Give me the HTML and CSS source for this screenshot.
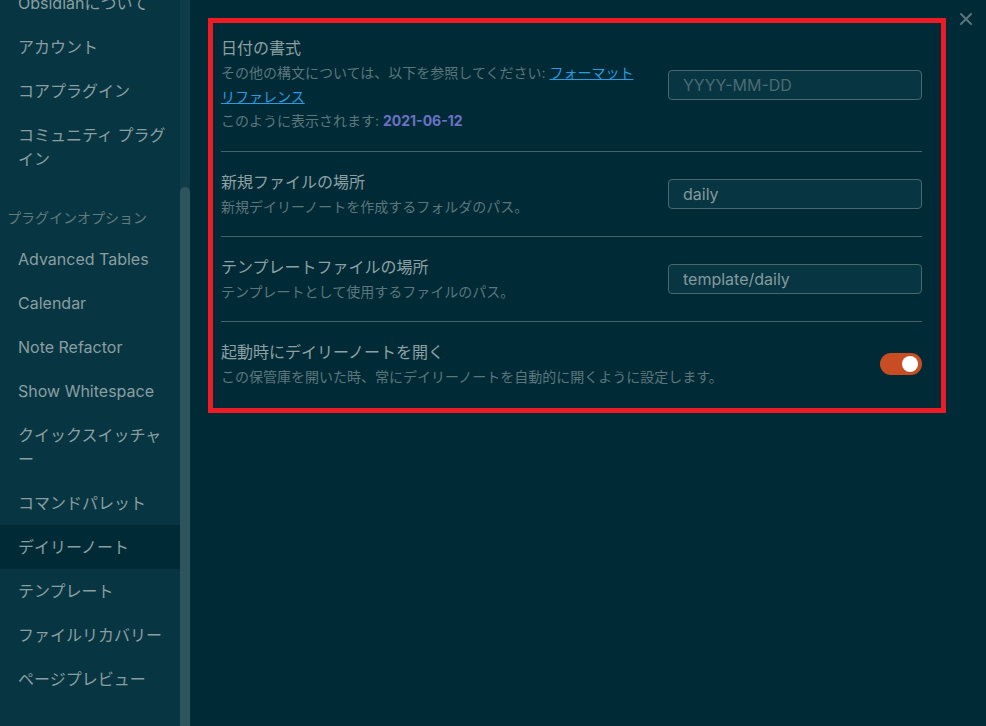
FILE: index.html
```html
<!DOCTYPE html>
<html lang="ja">
<head>
<meta charset="utf-8">
<title>設定 - デイリーノート</title>
<link rel="stylesheet" href="styles.css">
</head>
<body>
<div class="app">
  <nav class="sidebar">
    <div class="tabs">
      <div class="tab">Obsidianについて</div>
      <div class="tab">アカウント</div>
      <div class="tab">コアプラグイン</div>
      <div class="tab">コミュニティ プラグイン</div>
      <div class="group-title">プラグインオプション</div>
      <div class="tab">Advanced Tables</div>
      <div class="tab">Calendar</div>
      <div class="tab">Note Refactor</div>
      <div class="tab">Show Whitespace</div>
      <div class="tab">クイックスイッチャー</div>
      <div class="tab">コマンドパレット</div>
      <div class="tab active">デイリーノート</div>
      <div class="tab">テンプレート</div>
      <div class="tab">ファイルリカバリー</div>
      <div class="tab">ページプレビュー</div>
    </div>
  </nav>
  <div class="scrollbar"><div class="thumb"></div></div>
  <main class="content">
    <div class="settings">
      <div class="item">
        <div class="info narrow">
          <div class="name">日付の書式</div>
          <div class="desc tall">その他の構文については、以下を参照してください: <a class="link" href="#">フォーマットリファレンス</a><br>このように表示されます: <b class="date">2021-06-12</b></div>
        </div>
        <div class="control"><input class="text" type="text" placeholder="YYYY-MM-DD"></div>
      </div>
      <div class="item">
        <div class="info">
          <div class="name">新規ファイルの場所</div>
          <div class="desc">新規デイリーノートを作成するフォルダのパス。</div>
        </div>
        <div class="control"><input class="text" type="text" value="daily"></div>
      </div>
      <div class="item">
        <div class="info">
          <div class="name">テンプレートファイルの場所</div>
          <div class="desc">テンプレートとして使用するファイルのパス。</div>
        </div>
        <div class="control"><input class="text" type="text" value="template/daily"></div>
      </div>
      <div class="item">
        <div class="info">
          <div class="name">起動時にデイリーノートを開く</div>
          <div class="desc">この保管庫を開いた時、常にデイリーノートを自動的に開くように設定します。</div>
        </div>
        <div class="control"><div class="toggle"><div class="knob"></div></div></div>
      </div>
    </div>
    <div class="highlight"></div>
    <div class="close">
      <svg width="14" height="14" viewBox="0 0 14 14"><path d="M2 2 L12 12 M12 2 L2 12" stroke="#5b757c" stroke-width="2" stroke-linecap="round" fill="none"/></svg>
    </div>
  </main>
</div>
</body>
</html>
```

FILE: styles.css
```css
* { box-sizing: border-box; }
html, body { margin: 0; padding: 0; }
body {
  width: 986px;
  height: 726px;
  overflow: hidden;
  background: #002b36;
  font-family: Inter, "Noto Sans CJK JP", sans-serif;
  line-break: loose;
}
.app {
  display: flex;
  height: 726px;
}
.sidebar {
  width: 180px;
  flex: 0 0 180px;
  background: #073642;
  overflow: hidden;
}
.tabs {
  margin-top: -19px;
}
.tab {
  padding: 10px 12px 10px 18px;
  font-size: 16px;
  line-height: 24px;
  color: #8a9ea1;
}
.tab.active {
  background: #002b36;
}
.group-title {
  padding: 27px 7px 9px 7px;
  font-size: 14px;
  line-height: 20px;
  color: #62797f;
}
.scrollbar {
  width: 10px;
  flex: 0 0 10px;
  background: #0e3c48;
  padding-top: 187px;
  display: flex;
  flex-direction: column;
}
.thumb {
  flex: 1;
  background: #2e545e;
  border-radius: 5px 5px 0 0;
}
.content {
  flex: 1;
  position: relative;
  background: #002b36;
  padding: 18px 0 0 31px;
}
.settings {
  width: 701px;
}
.item {
  display: flex;
  align-items: center;
  padding: 18px 0;
  border-top: 1px solid #43626a;
}
.item:first-child {
  border-top: none;
}
.info {
  flex: 1 1 auto;
  margin-right: 16px;
}
.info.narrow {
  flex: 0 1 424px;
  max-width: 424px;
}
.name {
  font-size: 16px;
  line-height: 25px;
  color: #8ea0a3;
}
.desc {
  font-size: 14px;
  line-height: 23px;
  color: #5d767c;
}
.desc.tall {
  line-height: 24px;
}
.link {
  color: #2d9ae0;
  text-decoration: underline;
}
.date {
  color: #6c71c4;
  font-weight: 700;
}
.control {
  flex: 0 0 auto;
  margin-left: auto;
  display: flex;
  justify-content: flex-end;
}
.text {
  width: 254px;
  height: 30px;
  margin: 0;
  padding: 0 14px;
  border: 1px solid #4a676f;
  border-radius: 4px;
  background: #073642;
  color: #86999d;
  font-family: Inter, "Noto Sans CJK JP", sans-serif;
  font-size: 16px;
  outline: none;
}
.text::placeholder {
  color: #4c6a72;
}
.toggle {
  width: 42px;
  height: 22px;
  border-radius: 11px;
  background: #c94d22;
  display: flex;
  align-items: center;
  justify-content: flex-end;
  padding: 0 4px;
}
.knob {
  width: 16px;
  height: 16px;
  border-radius: 50%;
  background: #ffffff;
}
.highlight {
  position: absolute;
  left: 18px;
  top: 18px;
  width: 738px;
  height: 395px;
  border: 5px solid #ed1c24;
  pointer-events: none;
}
.close {
  position: absolute;
  left: 769px;
  top: 12px;
  width: 14px;
  height: 14px;
  display: flex;
}
```
